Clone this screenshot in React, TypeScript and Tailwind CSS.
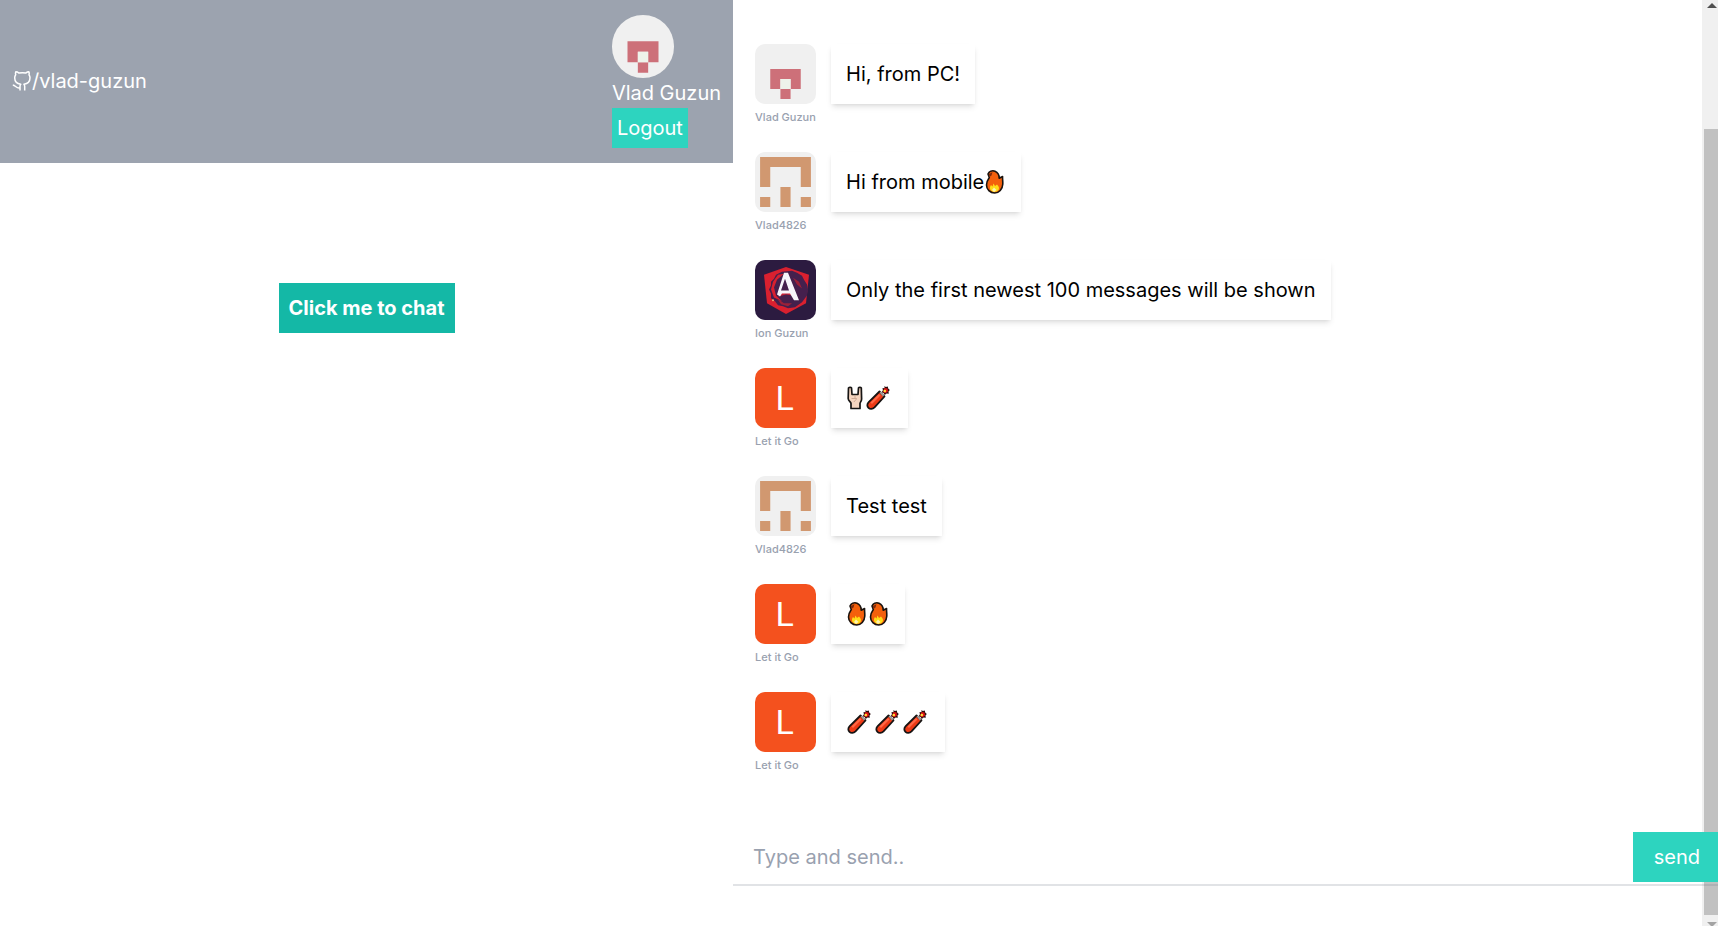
import React from "react";

type AvatarKind = "pink" | "orange" | "shield" | "letter";
type Emoji = "fire" | "dynamite" | "horns";

interface Message {
  id: number;
  author: string;
  avatar: AvatarKind;
  text?: string;
  emojis?: Emoji[];
}

const messages: Message[] = [
  { id: 1, author: "Vlad Guzun", avatar: "pink", text: "Hi, from PC!" },
  { id: 2, author: "Vlad4826", avatar: "orange", text: "Hi from mobile", emojis: ["fire"] },
  { id: 3, author: "Ion Guzun", avatar: "shield", text: "Only the first newest 100 messages will be shown" },
  { id: 4, author: "Let it Go", avatar: "letter", emojis: ["horns", "dynamite"] },
  { id: 5, author: "Vlad4826", avatar: "orange", text: "Test test" },
  { id: 6, author: "Let it Go", avatar: "letter", emojis: ["fire", "fire"] },
  { id: 7, author: "Let it Go", avatar: "letter", emojis: ["dynamite", "dynamite", "dynamite"] },
];

function PinkIdenticon({ className }: { className: string }) {
  return (
    <svg viewBox="0 0 12 12" className={className} preserveAspectRatio="none" aria-hidden="true">
      <path fill="#f0f0f0" d="M0 0h12v12H0z" />
      <path fill="#cd7079" d="M3 5h6v4H7V7H5v2H3zM5 9h2v2H5z" />
      <path fill="#eef3ea" d="M5 7h2v2H5z" />
    </svg>
  );
}

function OrangeIdenticon({ className }: { className: string }) {
  return (
    <svg viewBox="0 0 12 12" className={className} preserveAspectRatio="none" aria-hidden="true">
      <path fill="#f0f0f0" d="M0 0h12v12H0z" />
      <path fill="#d19870" d="M1 1h10v6H9V3H3v4H1zM5 7h2v4H5zM1 9h2v2H1zM9 9h2v2H9z" />
    </svg>
  );
}

function ShieldPicture({ className }: { className: string }) {
  return (
    <svg viewBox="0 0 61 61" className={className} preserveAspectRatio="none" aria-hidden="true">
      <path fill="#2c1b40" d="M0 0h61v61H0z" />
      <path fill="#d9202f" d="M31 7l23 8-3 29-20 11-19-11-3-29z" />
      <path
        fill="#45204d"
        d="M27 12l-6 3-2 4-3 3 0 4-2 4 2 4 0 5 4 3 3 4 5 1 5 2 7-1 7-5 5-7 1-6-1-5-3-5-2-4-5-3-5-2z"
      />
      <path fill="#d9202f" d="M29 14l-7 6-3 8 2 8 6 6-8-4-3-8 2-8 5-7z" />
      <path fill="#9c2038" d="M38 18l6 4 3 7-5-4zM22 39l7 5 8 0-4 3-7-2z" />
      <path fill="#c42138" d="M27 33h9l2 3-7-1-8 2z" />
      <path fill="#f7f5fa" fillRule="evenodd" d="M29 13h4l11 28h-5l-4-7h-8l-2 3-3-2zM30 19l-4 12h8z" />
      <circle cx="18" cy="41" r="1" fill="#e9b27a" />
    </svg>
  );
}

function LetterPicture({ className }: { className: string }) {
  return (
    <div className={`flex items-center justify-center bg-[#f4511e] pr-0.5 font-['Roboto','Liberation_Sans',sans-serif] text-[34px] text-white ${className}`}>
      L
    </div>
  );
}

const pictures = {
  pink: PinkIdenticon,
  orange: OrangeIdenticon,
  shield: ShieldPicture,
  letter: LetterPicture,
};

function Avatar({ kind }: { kind: AvatarKind }) {
  const Picture = pictures[kind];
  return <Picture className="h-[60px] w-[61px] rounded-[10px]" />;
}

function Fire() {
  return (
    <svg viewBox="0 0 22 26" className="h-[26px] w-[22px]" role="img" aria-label="fire">
      <path
        d="M4 5C5 2.500 8 1.200 11 2.200c3 1.200 4.200 4 4.200 7L18.600 7.500c-.3 2 .3 4 .2 7.500C18.500 20.500 15 24 10.800 24 6 24 2.500 20.500 2.500 16c0-3.200 1.400-5.500 2.800-7.500z"
        fill="#f4600c"
        stroke="#1a1410"
        strokeWidth="1.600"
        strokeLinejoin="round"
      />
      <path d="M4.800 5.200L8.500 3 7.500 6.500 5.500 8z" fill="#7c2a0c" />
      <path
        d="M9.500 14.500l1.500 2.500 2-1.500c2 2 2.500 3.500 1.500 5.500-2 2.500-6 2.500-8 0-1-2-.5-4 .5-5l1.500 1.500z"
        fill="#ffdc18"
      />
      <path d="M8 21l2-2.500 2.500 2.500-2.500 2z" fill="#fff3b0" />
    </svg>
  );
}

function Dynamite() {
  return (
    <svg viewBox="0 0 28 26" className="h-[26px] w-[28px]" role="img" aria-label="dynamite">
      <path
        d="M14.500 6.500l5 5L9.500 22.300c-2 2-4.500 2-6 .5s-1.700-3.700.2-5.600z"
        fill="#ed3a16"
        stroke="#171312"
        strokeWidth="1.800"
        strokeLinejoin="round"
      />
      <path d="M5.500 17.500L14 9l1.500 1.500L7 19z" fill="#ff6847" />
      <path d="M14.500 7.500l1.500-1 3.500 3.500-1.500 1.500z" fill="#a9a19e" />
      <path d="M19.500 1l1.300 1 2-.5.4 2 1.600 1.500-1.300 1.500.3 2.200-2.200-.2L19.700 10l-1-2-2-.8 1.200-1.900-.4-2.300 2 .2z" fill="#2b0b0b" />
      <path d="M19.500 3l3 .5.500 3-2.500 1.800-2.500-1.300z" fill="#e01313" />
      <circle cx="19.800" cy="6" r="1.300" fill="#ffe13a" />
    </svg>
  );
}

function Horns() {
  return (
    <svg viewBox="0 0 19 26" className="h-[26px] w-[19px]" role="img" aria-label="sign of the horns">
      <path
        d="M2.500 3C3.300 2 5 2 5.500 3l.5 6.500h6l.5-6.500c.5-1 2.200-1 2.800 0l.3 11c0 2.500-1.600 3-1.600 4.500V23.500H5v-5C5 17 2.200 16 2.200 13.500z"
        fill="#f5d5c0"
        stroke="#171514"
        strokeWidth="1.700"
        strokeLinejoin="round"
      />
      <path d="M5.500 13.500h5c0 2-2 1.500-2.500 3.500M9 11v2" fill="none" stroke="#c9a48e" strokeWidth="0.900" />
    </svg>
  );
}

const emojiIcons = { fire: Fire, dynamite: Dynamite, horns: Horns };

function MessageRow({ message }: { message: Message }) {
  return (
    <li className="flex h-[108px] items-start gap-[15px]">
      <div className="w-[61px]">
        <Avatar kind={message.avatar} />
        <p className="mt-[5px] text-[11px] leading-4 font-medium whitespace-nowrap text-gray-400">{message.author}</p>
      </div>
      <div className="flex h-[60px] items-center bg-white px-[15px] text-black shadow-md">
        {message.text}
        {message.emojis?.map((name, i) => {
          const Icon = emojiIcons[name];
          return <Icon key={i} />;
        })}
      </div>
    </li>
  );
}

function Scrollbar() {
  return (
    <div className="flex w-4 shrink-0 flex-col bg-[#f0f0f0]" aria-hidden="true">
      <svg viewBox="0 0 16 129" className="h-[129px] w-4">
        <path d="M10 3l5 5H5z" fill="#505050" />
      </svg>
      <div className="ml-0.5 flex-1 bg-[#c1c1c1]" />
      <svg viewBox="0 0 16 11" className="h-[11px] w-4">
        <path d="M5 7h10l-5 5z" fill="#a3a3a3" />
      </svg>
    </div>
  );
}

export default function App() {
  return (
    <div className="flex h-screen overflow-hidden bg-white font-['Inter','Liberation_Sans',sans-serif] text-[20px] leading-[30px]">
      <section className="w-[42.67%] shrink-0">
        <header className="flex items-center justify-between bg-[#9ca3af] px-3 py-[15px] text-white">
          <a href="https://github.com/vlad-guzun" className="flex items-center pb-0.5">
            <svg
              viewBox="0 0 20 20"
              className="size-5"
              fill="none"
              stroke="currentColor"
              strokeWidth="1.500"
              strokeLinejoin="round"
              aria-hidden="true"
            >
              <path d="M8 19.500v-4.200c0-1 .3-1.600.8-2.100C5.300 12.800 2.700 11.500 2.700 6.800c0-1.200.4-2.200 1-3-.3-.8-.3-2 .1-3 1.200 0 2.300.6 3.200 1.300 2.200-.5 4.500-.5 6.700 0 .9-.7 2-1.300 3.200-1.300.4 1 .4 2.200.1 3 .6.800 1 1.800 1 3 0 4.700-2.600 6-6.100 6.400.5.5.8 1.100.8 2.100v4.200M8 16.800c-3.700.9-4.200-2.300-7.200-2.800" />
            </svg>
            /vlad-guzun
          </a>
          <div>
            <PinkIdenticon className="h-[63px] w-[62px] rounded-full" />
            <p>Vlad Guzun</p>
            <button type="button" className="block bg-[#2dd4bf] p-[5px]">
              Logout
            </button>
          </div>
        </header>
        <div className="flex justify-center pt-[120px]">
          <button type="button" className="bg-[#14b8a6] p-[10px] font-bold text-white">
            Click me to chat
          </button>
        </div>
      </section>

      <main className="relative flex min-w-0 flex-1">
        <ul className="min-w-0 flex-1 overflow-hidden pt-11 pl-[22px]">
          {messages.map((message) => (
            <MessageRow key={message.id} message={message} />
          ))}
        </ul>
        <Scrollbar />
        <form
          className="absolute inset-x-0 bottom-10 flex items-start border-b-2 border-gray-500/20"
          onSubmit={(e) => e.preventDefault()}
        >
          <input
            type="text"
            aria-label="Message"
            placeholder="Type and send.."
            className="mb-0.5 h-[50px] min-w-0 flex-1 bg-white px-5 outline-none placeholder:text-gray-400"
          />
          <button type="submit" className="h-[50px] bg-[#2dd4bf] pr-[18px] pl-[21px] text-white">
            send
          </button>
        </form>
      </main>
    </div>
  );
}
